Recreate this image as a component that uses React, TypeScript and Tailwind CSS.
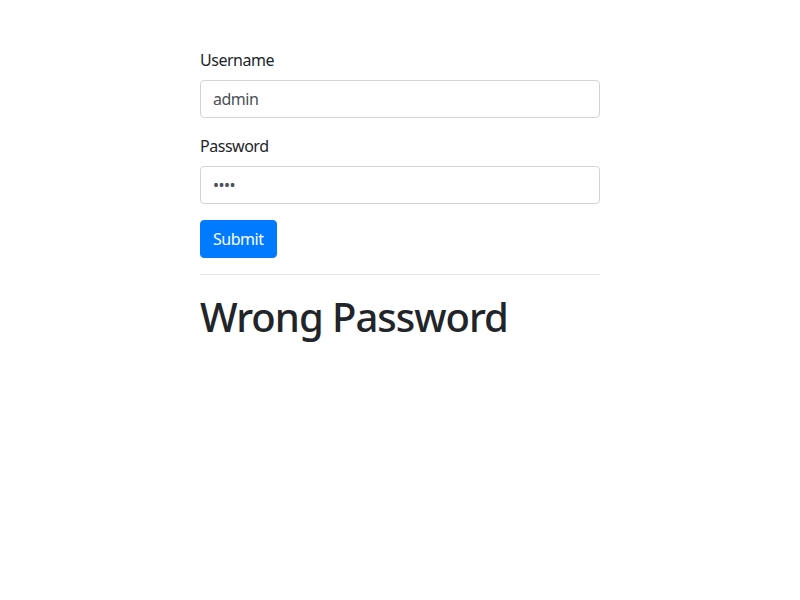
import React from 'react';

export default function App() {
  return (
    <div className="min-h-screen bg-white text-[#212529] tracking-[-0.03em]" style={{ fontFamily: '"Noto Sans", "Open Sans", sans-serif' }}>
      <div className="w-[400px] mx-auto pt-12">
        <form onSubmit={e => e.preventDefault()}>
          <div className="mb-4">
            <label className="block mb-2 text-base leading-6">Username</label>
            <input
              type="text"
              defaultValue="admin"
              className="block w-full h-[38px] px-3 py-1.5 text-base leading-6 tracking-[-0.03em] text-[#495057] bg-white border border-[#ced4da] rounded outline-none"
            />
          </div>
          <div className="mb-4">
            <label className="block mb-2 text-base leading-6">Password</label>
            <input
              type="password"
              defaultValue="1234"
              className="block w-full h-[38px] px-3 py-1.5 text-base leading-6 text-[#495057] bg-white border border-[#ced4da] rounded outline-none"
            />
          </div>
          <button type="submit" className="h-[38px] px-3 py-1.5 text-base leading-6 tracking-[-0.03em] text-white bg-[#007bff] border border-[#007bff] rounded">
            Submit
          </button>
        </form>
        <hr className="mt-4 mb-4 border-0 border-t border-[rgba(0,0,0,0.1)]" />
        <h1 className="text-[40px] leading-[1.2] font-medium tracking-[-0.025em] pt-0.5">Wrong Password</h1>
      </div>
    </div>
  );
}
